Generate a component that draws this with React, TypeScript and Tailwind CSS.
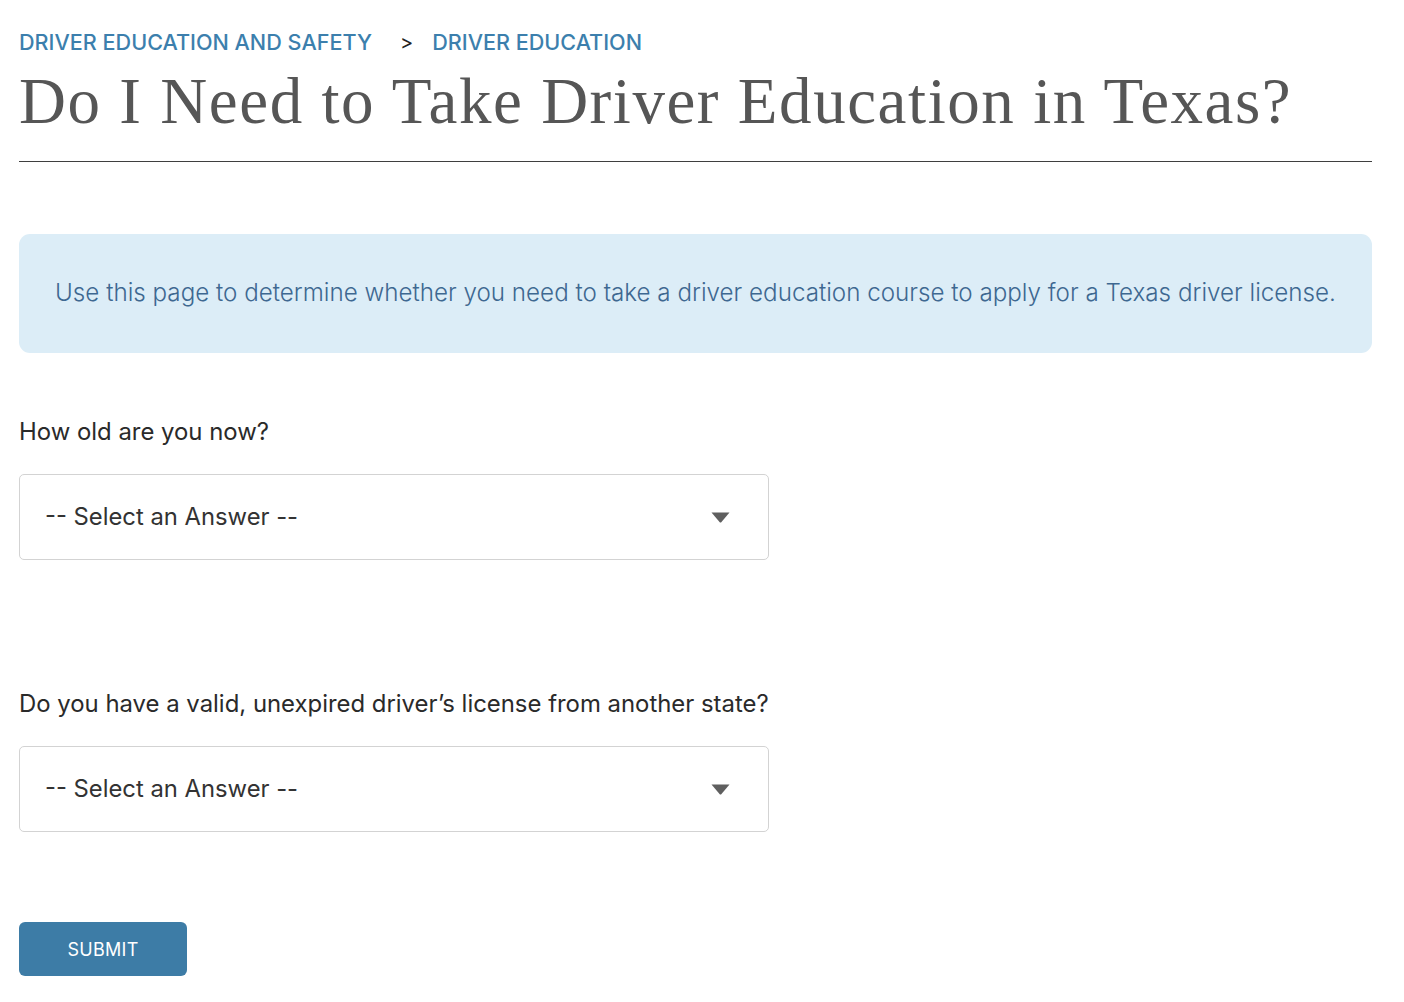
const QUESTIONS = [
  "How old are you now?",
  "Do you have a valid, unexpired driver\u2019s license from another state?",
];

function AnswerSelect() {
  return (
    <div className="w-[750px] h-[86px] rounded-[5px] border border-[#d3d3d3] bg-white flex items-center pl-[25px] pr-[38px]">
      <span className="text-[23.8px] text-[#333333] flex-1">-- Select an Answer --</span>
      {/* caret */}
      <svg width="19" height="11" viewBox="0 0 19 11">
        <path d="M0.5 0.5 H18.5 L10.5 10 Q9.5 11 8.5 10 Z" fill="#5f5f5f" />
      </svg>
    </div>
  );
}

export default function App() {
  return (
    <div className="min-h-screen bg-white font-['Inter',sans-serif] px-[19px] pt-[29px]">
      <div className="w-[1353px]">
        {/* Breadcrumb */}
        <nav className="flex items-center text-[21.6px] font-medium uppercase text-[#3c7fad] leading-[26px]">
          <span>Driver Education and Safety</span>
          <span className="text-[#222] font-normal ml-[28px] mr-[19px] text-[20px]">&gt;</span>
          <span>Driver Education</span>
        </nav>

        <h1 className="font-['Liberation_Serif',serif] text-[65px] leading-[80px] tracking-[1.55px] text-[#565656] mt-[6px] pb-[20px] border-b border-[#3f3f3f]">
          Do I Need to Take Driver Education in Texas?
        </h1>

        {/* Info box */}
        <div className="mt-[72px] h-[119px] rounded-[11px] bg-[#dcedf7] flex items-center justify-center">
          <p className="text-[24.2px] font-light text-[#3e6891]">
            Use this page to determine whether you need to take a driver education course to apply for a Texas driver license.
          </p>
        </div>

        {/* Questions */}
        <div className="mt-[64px] flex flex-col gap-[129px]">
          {QUESTIONS.map((q) => (
            <div key={q} className="flex flex-col gap-[27px]">
              <label className="text-[23.9px] text-[#2a2a2a] leading-[30px]">{q}</label>
              <AnswerSelect />
            </div>
          ))}
        </div>

        <button className="mt-[90px] w-[168px] h-[54px] rounded-[6px] bg-[#3d7ca6] text-white text-[18px] uppercase tracking-[0.3px]">
          Submit
        </button>
      </div>
    </div>
  );
}
